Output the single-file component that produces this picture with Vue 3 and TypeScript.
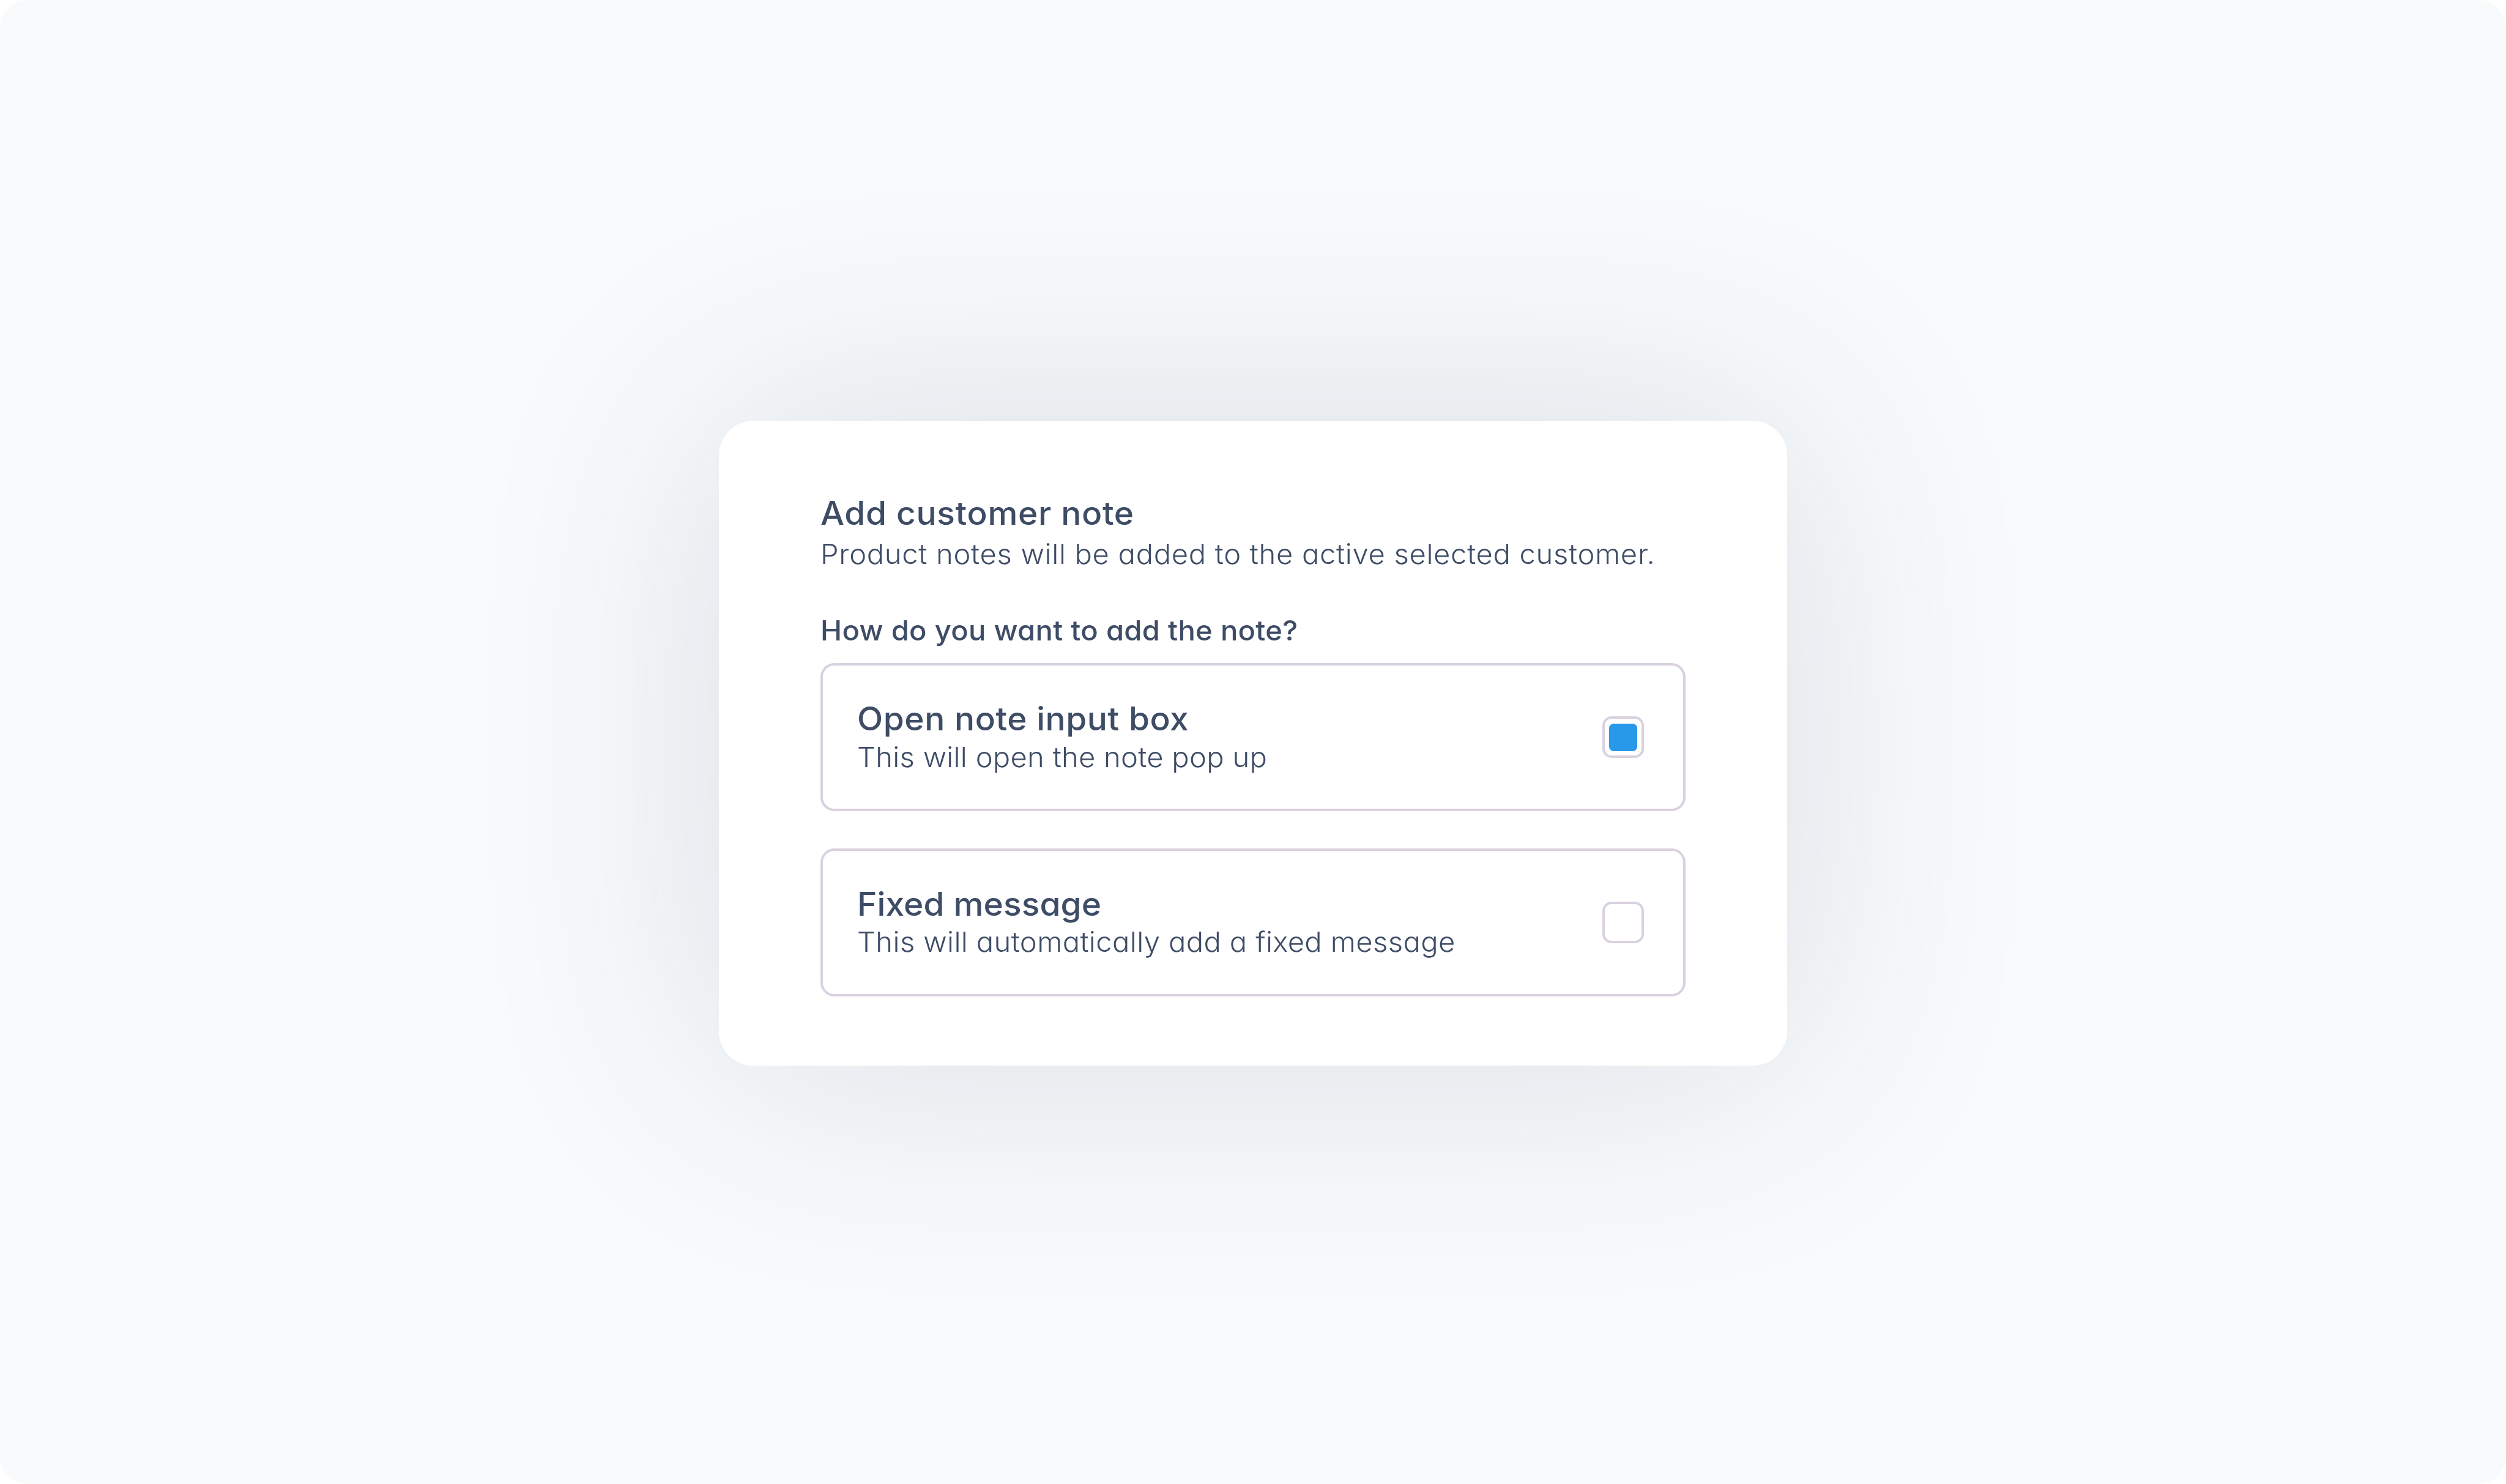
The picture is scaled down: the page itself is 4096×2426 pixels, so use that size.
<script setup lang="ts">
interface Option {
  id: string
  title: string
  text: string
  checked: boolean
}

const options: Option[] = [
  { id: 'open', title: 'Open note input box', text: 'This will open the note pop up', checked: true },
  { id: 'fixed', title: 'Fixed message', text: 'This will automatically add a fixed message', checked: false },
]
</script>

<template>
  <main class="page">
    <section class="card">
      <h1 class="title">Add customer note</h1>
      <p class="text">Product notes will be added to the active selected customer.</p>
      <h2 class="question">How do you want to add the note?</h2>
      <div class="options">
        <label v-for="o in options" :key="o.id" class="option" :class="o.id">
          <span class="copy">
            <span class="option-title">{{ o.title }}</span>
            <span class="option-text">{{ o.text }}</span>
          </span>
          <span class="box"><span v-if="o.checked" class="fill"></span></span>
        </label>
      </div>
    </section>
  </main>
</template>

<style>
body {
  background: #fff;
}
</style>

<style scoped>
.page {
  --u: calc(100vw / 4336);
  position: relative;
  z-index: 0;
  box-sizing: border-box;
  display: flex;
  flex-direction: column;
  align-items: center;
  height: 100vh;
  padding-top: calc(var(--u) * 728);
  overflow: hidden;
  border-radius: calc(var(--u) * 48);
  background: #f8fafc;
  color: #3e4c66;
  font-family: Inter, 'Open Sans', sans-serif;
  font-feature-settings: 'cv11';
}
.card {
  position: relative;
  box-sizing: border-box;
  flex: none;
  width: calc(var(--u) * 1848);
  height: calc(var(--u) * 1116);
  padding: calc(var(--u) * 125) calc(var(--u) * 176) 0;
  border-radius: calc(var(--u) * 60);
  background: #fff;
}
.card::before {
  content: '';
  position: absolute;
  z-index: -1;
  inset: 0;
  border-radius: inherit;
  background: #283c50;
  filter: blur(calc(var(--u) * 218));
  opacity: 0.142;
}
h1, h2, p {
  margin: 0;
  white-space: nowrap;
}
.title, .text, .question, .option-title, .option-text {
  transform: scaleX(1.04);
  transform-origin: left center;
}
.title, .option-title {
  font-size: calc(var(--u) * 56);
  font-weight: 500;
}
.title {
  line-height: calc(var(--u) * 70.6);
  letter-spacing: calc(var(--u) * 0.71);
}
.text, .option-text {
  font-size: calc(var(--u) * 48);
  font-weight: 300;
}
.text {
  line-height: calc(var(--u) * 72);
  letter-spacing: calc(var(--u) * 0.7);
}
.question {
  margin-top: calc(var(--u) * 59.4);
  font-size: calc(var(--u) * 48);
  font-weight: 500;
  line-height: calc(var(--u) * 72);
  letter-spacing: calc(var(--u) * 0.3);
}
.options {
  display: flex;
  flex-direction: column;
  gap: calc(var(--u) * 64);
  margin-top: calc(var(--u) * 21);
}
.option {
  box-sizing: border-box;
  display: flex;
  justify-content: space-between;
  align-items: center;
  height: calc(var(--u) * 256);
  padding: 0 calc(var(--u) * 67.5) 0 calc(var(--u) * 59);
  border: 4px solid #d9d1e0;
  border-radius: calc(var(--u) * 24);
}
.copy {
  display: flex;
  flex-direction: column;
  padding-top: calc(var(--u) * 3);
  white-space: nowrap;
}
.option-title {
  line-height: calc(var(--u) * 66);
}
.option-text {
  line-height: calc(var(--u) * 66);
}
.open .option-title {
  letter-spacing: calc(var(--u) * 0.56);
}
.open .option-text {
  letter-spacing: calc(var(--u) * 0.27);
}
.fixed .option-title {
  letter-spacing: calc(var(--u) * 0.13);
}
.fixed .option-text {
  letter-spacing: calc(var(--u) * 0.39);
}
.box {
  box-sizing: border-box;
  display: flex;
  align-items: center;
  justify-content: center;
  width: calc(var(--u) * 72);
  height: calc(var(--u) * 72);
  border: 4px solid #d9d1e0;
  border-radius: calc(var(--u) * 16);
}
.fill {
  width: calc(var(--u) * 48);
  height: calc(var(--u) * 48);
  border-radius: calc(var(--u) * 8);
  background: #2898e8;
}
</style>
